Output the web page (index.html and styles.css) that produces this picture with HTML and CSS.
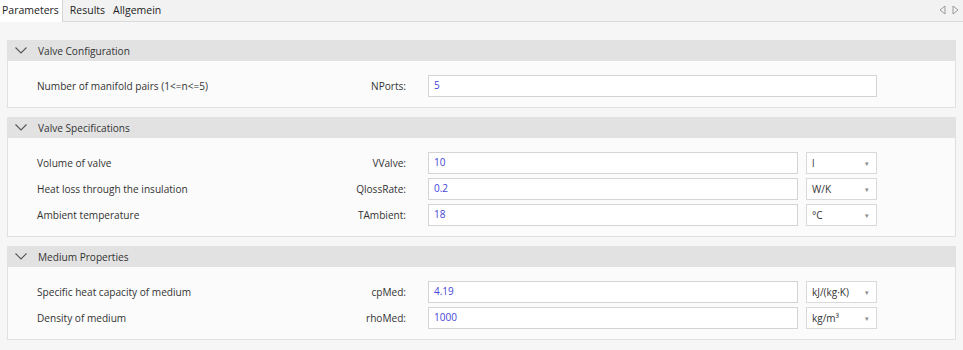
FILE: index.html
```html
<!DOCTYPE html>
<html>
<head>
<meta charset="utf-8">
<link rel="stylesheet" href="styles.css">
</head>
<body>
<div class="tabbar">
  <div class="tabs">
    <div class="tab active">Parameters</div>
    <div class="tab">Results</div>
    <div class="tab">Allgemein</div>
  </div>
  <div class="scrollers">
    <svg width="7" height="10" viewBox="0 0 7 10"><polygon points="6,1 1,5 6,9" fill="none" stroke="#9a9a9a" stroke-width="1"/></svg>
    <svg width="7" height="10" viewBox="0 0 7 10"><polygon points="1,1 6,5 1,9" fill="none" stroke="#9a9a9a" stroke-width="1"/></svg>
  </div>
</div>
<div class="content">
  <section class="group">
    <div class="group-head">
      <svg class="chev" width="12" height="7" viewBox="0 0 12 7"><polyline points="0.5,0.5 6,6 11.5,0.5" fill="none" stroke="#555" stroke-width="1.1"/></svg>
      <span>Valve Configuration</span>
    </div>
    <div class="group-body">
      <div class="row">
        <div class="desc">Number of manifold pairs (1&lt;=n&lt;=5)</div>
        <div class="name">NPorts:</div>
        <div class="fields"><div class="value">5</div></div>
      </div>
    </div>
  </section>
  <section class="group">
    <div class="group-head">
      <svg class="chev" width="12" height="7" viewBox="0 0 12 7"><polyline points="0.5,0.5 6,6 11.5,0.5" fill="none" stroke="#555" stroke-width="1.1"/></svg>
      <span>Valve Specifications</span>
    </div>
    <div class="group-body">
      <div class="row">
        <div class="desc">Volume of valve</div>
        <div class="name">VValve:</div>
        <div class="fields"><div class="value">10</div><div class="unit"><span>l</span><span class="caret">▾</span></div></div>
      </div>
      <div class="row">
        <div class="desc">Heat loss through the insulation</div>
        <div class="name">QlossRate:</div>
        <div class="fields"><div class="value">0.2</div><div class="unit"><span>W/K</span><span class="caret">▾</span></div></div>
      </div>
      <div class="row">
        <div class="desc">Ambient temperature</div>
        <div class="name">TAmbient:</div>
        <div class="fields"><div class="value">18</div><div class="unit"><span>°C</span><span class="caret">▾</span></div></div>
      </div>
    </div>
  </section>
  <section class="group">
    <div class="group-head">
      <svg class="chev" width="12" height="7" viewBox="0 0 12 7"><polyline points="0.5,0.5 6,6 11.5,0.5" fill="none" stroke="#555" stroke-width="1.1"/></svg>
      <span>Medium Properties</span>
    </div>
    <div class="group-body">
      <div class="row">
        <div class="desc">Specific heat capacity of medium</div>
        <div class="name">cpMed:</div>
        <div class="fields"><div class="value">4.19</div><div class="unit"><span>kJ/(kg·K)</span><span class="caret">▾</span></div></div>
      </div>
      <div class="row">
        <div class="desc">Density of medium</div>
        <div class="name">rhoMed:</div>
        <div class="fields"><div class="value">1000</div><div class="unit"><span>kg/m³</span><span class="caret">▾</span></div></div>
      </div>
    </div>
  </section>
</div>
</body>
</html>
```

FILE: styles.css
```css
* { box-sizing: border-box; }
html, body {
  margin: 0;
  padding: 0;
  background: #f6f6f6;
  font-family: "Open Sans", "Noto Sans", sans-serif;
  font-size: 10.1px;
  color: #333;
}
.tabbar {
  height: 22px;
  display: flex;
  justify-content: space-between;
  align-items: flex-start;
  background: #f2f2f2;
  border-bottom: 1px solid #dadada;
}
.tabs {
  display: flex;
  height: 22px;
}
.tab {
  height: 21px;
  line-height: 21px;
  padding: 0 2px 0 4px;
  font-size: 10.5px;
  color: #222;
  margin-right: 2px;
}
.tab.active {
  background: #ffffff;
  border-right: 1px solid #d6d6d6;
  height: 22px;
  padding: 0 3px 0 2px;
  margin-right: 3px;
}
.scrollers {
  display: flex;
  gap: 6px;
  padding: 5px 4px 0 0;
}
.content {
  padding: 18px 7px 0 7px;
  display: flex;
  flex-direction: column;
  gap: 9px;
}
.group {
  border: 1px solid #e0e0e0;
  background: #fbfbfb;
}
.group-head {
  height: 21px;
  margin-top: -1px;
  margin-left: -1px;
  margin-right: -1px;
  background: #e2e2e2;
  display: flex;
  align-items: center;
  padding-left: 8px;
  font-size: 10.1px;
  color: #333;
}
.chev { margin-right: 11px; }
.group-body {
  padding: 14px 0 10px 29px;
  display: flex;
  flex-direction: column;
  gap: 4px;
}
.row {
  display: grid;
  grid-template-columns: 250px 141px 449px;
  height: 22px;
  align-items: center;
}
.desc { color: #333; }
.name {
  text-align: right;
  padding-right: 22px;
  color: #333;
}
.fields {
  display: flex;
  gap: 8px;
  height: 22px;
}
.value {
  flex: 1;
  background: #ffffff;
  border: 1px solid #d4d4d4;
  color: #4444d8;
  padding-left: 5px;
  line-height: 18px;
  font-size: 10px;
}
.unit {
  width: 71px;
  background: #ffffff;
  border: 1px solid #d9d9d9;
  display: flex;
  justify-content: space-between;
  align-items: center;
  padding: 0 7px 0 5px;
  color: #333;
  font-size: 10px;
}
.caret {
  font-size: 7px;
  color: #8a8a8a;
}
```
